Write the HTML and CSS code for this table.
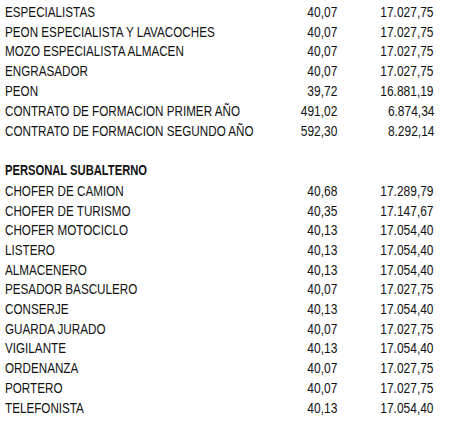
FILE: index.html
```html
<!DOCTYPE html>
<html lang="es">
<head>
<meta charset="utf-8">
<title>Tabla salarial</title>
<link rel="stylesheet" href="styles.css">
</head>
<body>
<div class="table">
  <div class="section first">
    <div class="row"><span class="name">ESPECIALISTAS</span><span class="num"><span class="n">40,07</span></span><span class="num"><span class="n">17.027,75</span></span></div>
    <div class="row"><span class="name">PEON ESPECIALISTA Y LAVACOCHES</span><span class="num"><span class="n">40,07</span></span><span class="num"><span class="n">17.027,75</span></span></div>
    <div class="row"><span class="name">MOZO ESPECIALISTA ALMACEN</span><span class="num"><span class="n">40,07</span></span><span class="num"><span class="n">17.027,75</span></span></div>
    <div class="row"><span class="name">ENGRASADOR</span><span class="num"><span class="n">40,07</span></span><span class="num"><span class="n">17.027,75</span></span></div>
    <div class="row"><span class="name">PEON</span><span class="num"><span class="n">39,72</span></span><span class="num"><span class="n">16.881,19</span></span></div>
    <div class="row"><span class="name">CONTRATO DE FORMACION PRIMER AÑO</span><span class="num"><span class="n">491,02</span></span><span class="num"><span class="n">6.874,34</span></span></div>
    <div class="row"><span class="name">CONTRATO DE FORMACION SEGUNDO AÑO</span><span class="num"><span class="n">592,30</span></span><span class="num"><span class="n">8.292,14</span></span></div>
  </div>
  <div class="section second">
    <div class="row head"><span class="name">PERSONAL SUBALTERNO</span></div>
    <div class="row"><span class="name">CHOFER DE CAMION</span><span class="num"><span class="n">40,68</span></span><span class="num"><span class="n">17.289,79</span></span></div>
    <div class="row"><span class="name">CHOFER DE TURISMO</span><span class="num"><span class="n">40,35</span></span><span class="num"><span class="n">17.147,67</span></span></div>
    <div class="row"><span class="name">CHOFER MOTOCICLO</span><span class="num"><span class="n">40,13</span></span><span class="num"><span class="n">17.054,40</span></span></div>
    <div class="row"><span class="name">LISTERO</span><span class="num"><span class="n">40,13</span></span><span class="num"><span class="n">17.054,40</span></span></div>
    <div class="row"><span class="name">ALMACENERO</span><span class="num"><span class="n">40,13</span></span><span class="num"><span class="n">17.054,40</span></span></div>
    <div class="row"><span class="name">PESADOR BASCULERO</span><span class="num"><span class="n">40,07</span></span><span class="num"><span class="n">17.027,75</span></span></div>
    <div class="row"><span class="name">CONSERJE</span><span class="num"><span class="n">40,13</span></span><span class="num"><span class="n">17.054,40</span></span></div>
    <div class="row"><span class="name">GUARDA JURADO</span><span class="num"><span class="n">40,07</span></span><span class="num"><span class="n">17.027,75</span></span></div>
    <div class="row"><span class="name">VIGILANTE</span><span class="num"><span class="n">40,13</span></span><span class="num"><span class="n">17.054,40</span></span></div>
    <div class="row"><span class="name">ORDENANZA</span><span class="num"><span class="n">40,07</span></span><span class="num"><span class="n">17.027,75</span></span></div>
    <div class="row"><span class="name">PORTERO</span><span class="num"><span class="n">40,07</span></span><span class="num"><span class="n">17.027,75</span></span></div>
    <div class="row"><span class="name">TELEFONISTA</span><span class="num"><span class="n">40,13</span></span><span class="num"><span class="n">17.054,40</span></span></div>
  </div>
</div>
</body>
</html>
```

FILE: styles.css
```css
html, body {
  margin: 0;
  padding: 0;
  background: #ffffff;
}
body {
  font-family: "Liberation Sans", Arial, sans-serif;
  font-size: 14.5px;
  color: #111111;
}
.table {
  padding: 2.8px 17px 0 5px;
}
.section.first .row {
  height: 19.8px;
  line-height: 19.8px;
}
.section.second {
  margin-top: 17.2px;
}
.section.second .row {
  height: 19.7px;
  line-height: 19.7px;
}
.section.second .row.head {
  height: 23.4px;
  line-height: 23.4px;
}
.row {
  display: grid;
  grid-template-columns: minmax(0, 1fr) 80px 97px;
  white-space: nowrap;
}
.name {
  display: inline-block;
  justify-self: start;
  transform: scaleX(0.805);
  transform-origin: left center;
}
.num {
  text-align: right;
  min-width: 0;
}
.n {
  display: inline-block;
  transform: scaleX(0.825);
  transform-origin: right center;
}
.head .name {
  font-weight: bold;
  transform: scaleX(0.772);
}
```
